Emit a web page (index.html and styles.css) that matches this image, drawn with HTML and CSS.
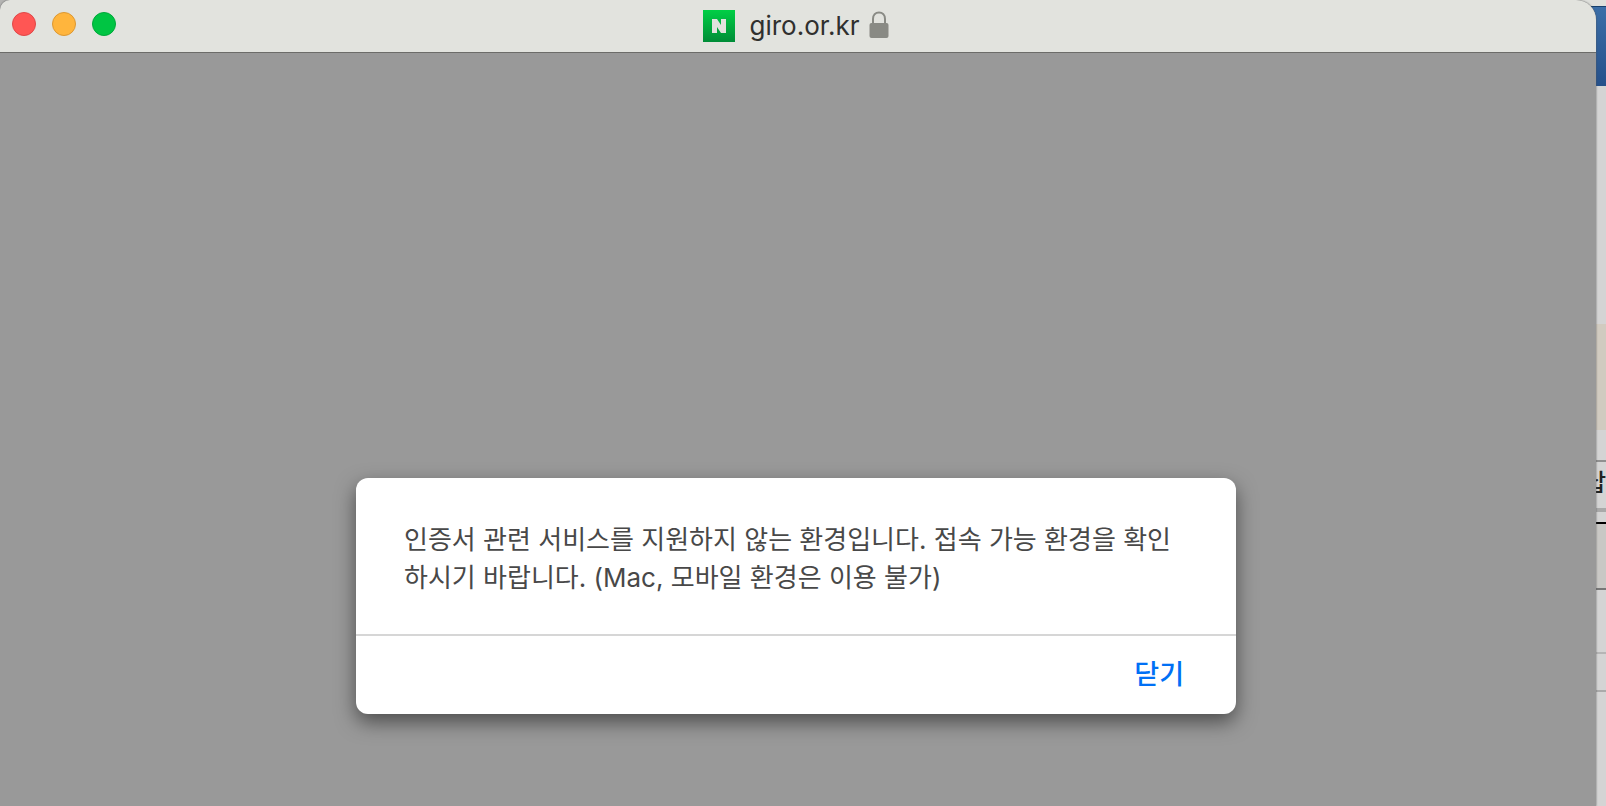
FILE: index.html
```html
<!DOCTYPE html>
<html lang="ko">
<head>
<meta charset="utf-8">
<title>giro.or.kr</title>
<link rel="stylesheet" href="styles.css">
</head>
<body>
<main class="window">
  <header class="titlebar">
    <div class="lights">
      <button class="light light-close" aria-label="Close"></button>
      <button class="light light-minimize" aria-label="Minimize"></button>
      <button class="light light-zoom" aria-label="Zoom"></button>
    </div>
    <div class="address">
      <svg class="favicon" viewBox="0 0 32 32" aria-hidden="true">
        <defs><linearGradient id="green" x1="0" y1="0" x2="0" y2="1"><stop offset="0" stop-color="#00cf45"/><stop offset="1" stop-color="#008c37"/></linearGradient></defs>
        <rect width="32" height="32" fill="url(#green)"/>
        <path d="M9 9h5l4 6V9h5v14h-5l-4-6v6H9z" fill="#e2e3de"/>
      </svg>
      <span class="host">giro.or.kr</span>
      <svg class="lock" viewBox="0 0 20 28" aria-hidden="true">
        <path d="M4 13V8c0-4 2.500-6.500 6-6.500S16 4 16 8v5" fill="none" stroke="#898a84" stroke-width="2"/>
        <rect x="0.500" y="12" width="19" height="15" rx="2" fill="#898a84"/>
      </svg>
    </div>
  </header>
  <div class="content">
    <section class="dialog" role="alertdialog" aria-labelledby="message">
      <p class="message" id="message">인증서 관련 서비스를 지원하지 않는 환경입니다. 접속 가능 환경을 확인하시기 바랍니다. (Mac, 모바일 환경은 이용 불가)</p>
      <div class="actions"><button class="close">닫기</button></div>
    </section>
  </div>
</main>
<aside class="behind">
  <div class="row row-top"></div>
  <div class="row row-blue"></div>
  <div class="row row-blank"></div>
  <div class="row row-beige"></div>
  <div class="row row-gap"></div>
  <div class="row row-label">납</div>
  <div class="row row-rule"></div>
  <div class="row row-field"></div>
  <div class="row row-item"></div>
  <div class="row row-next"></div>
</aside>
</body>
</html>
```
FILE: styles.css
```css
* { box-sizing: border-box; }
body {
  margin: 0;
  min-height: 100vh;
  display: flex;
  overflow: hidden;
  background: #b5b5b3;
  font-family: Inter, "Noto Sans CJK KR", sans-serif;
}
button { border: 0; padding: 0; background: none; font: inherit; }
.window {
  flex: 1;
  min-width: 0;
  z-index: 1;
  display: flex;
  flex-direction: column;
  border-radius: 10px 20px 0 0;
  overflow: hidden;
  background: #999;
  box-shadow: 0 0 2px #555;
}
.titlebar {
  display: grid;
  grid-template-columns: 1fr auto 1fr;
  align-items: center;
  height: 53px;
  padding: 0 16px 3px 12px;
  background: #e2e3de;
  border-bottom: 1px solid #6c6c69;
}
.lights { display: flex; gap: 16px; padding-bottom: 2px; }
.light { width: 24px; height: 24px; border-radius: 50%; border: 1px solid; }
.light-close { background: #ff5654; border-color: #df4848; }
.light-minimize { background: #ffb53d; border-color: #dc9833; }
.light-zoom { background: #00c543; border-color: #00a83a; }
.address { display: flex; align-items: center; padding-top: 2px; }
.favicon { width: 32px; height: 32px; margin-right: 15px; }
.host { font: 26px/32px Inter, sans-serif; color: #30302e; }
.lock { width: 20px; height: 28px; margin-left: 10px; margin-bottom: 2px; }
.content {
  flex: 1;
  display: flex;
  justify-content: center;
  align-items: flex-end;
  padding: 0 4px 92px 0;
}
.dialog {
  width: 880px;
  max-width: 100%;
  border-radius: 12px;
  background: #fff;
  box-shadow: 0 8px 20px rgba(0, 0, 0, 0.5);
}
.message {
  margin: 0;
  padding: 43px 48px 37px;
  font-size: 26px;
  line-height: 38px;
  font-weight: 400;
  color: #484848;
  word-break: break-all;
}
.actions {
  display: flex;
  justify-content: flex-end;
  border-top: 2px solid #d6d6d6;
  padding: 19px 52px;
}
.close { font-size: 27px; line-height: 40px; font-weight: 500; color: #0070f5; }
.behind {
  width: 30px;
  margin-left: -20px;
  flex: none;
  display: flex;
  flex-direction: column;
  background: #d4d4d4;
}
.row { flex: none; }
.row-top { height: 6px; background: #dfe0dc; }
.row-blue { height: 80px; border-top: 1px solid #17406e; background: linear-gradient(#3b6ea8, #25508a); }
.row-blank { height: 238px; }
.row-beige { height: 106px; background: #d1cbc0; }
.row-gap { height: 32px; border-bottom: 2px solid #909090; }
.row-label {
  height: 50px;
  border-bottom: 4px solid #a9a9a9;
  overflow: hidden;
  text-align: right;
  font-size: 24px;
  line-height: 42px;
  font-weight: 500;
  color: #222;
}
.row-rule { height: 12px; border-bottom: 2px solid #000; }
.row-field { height: 66px; background: #c9c8c5; border-bottom: 2px solid #777; }
.row-item { height: 64px; border-bottom: 2px solid #b5b5b5; }
.row-next { height: 38px; border-bottom: 2px solid #aaa; }
```
